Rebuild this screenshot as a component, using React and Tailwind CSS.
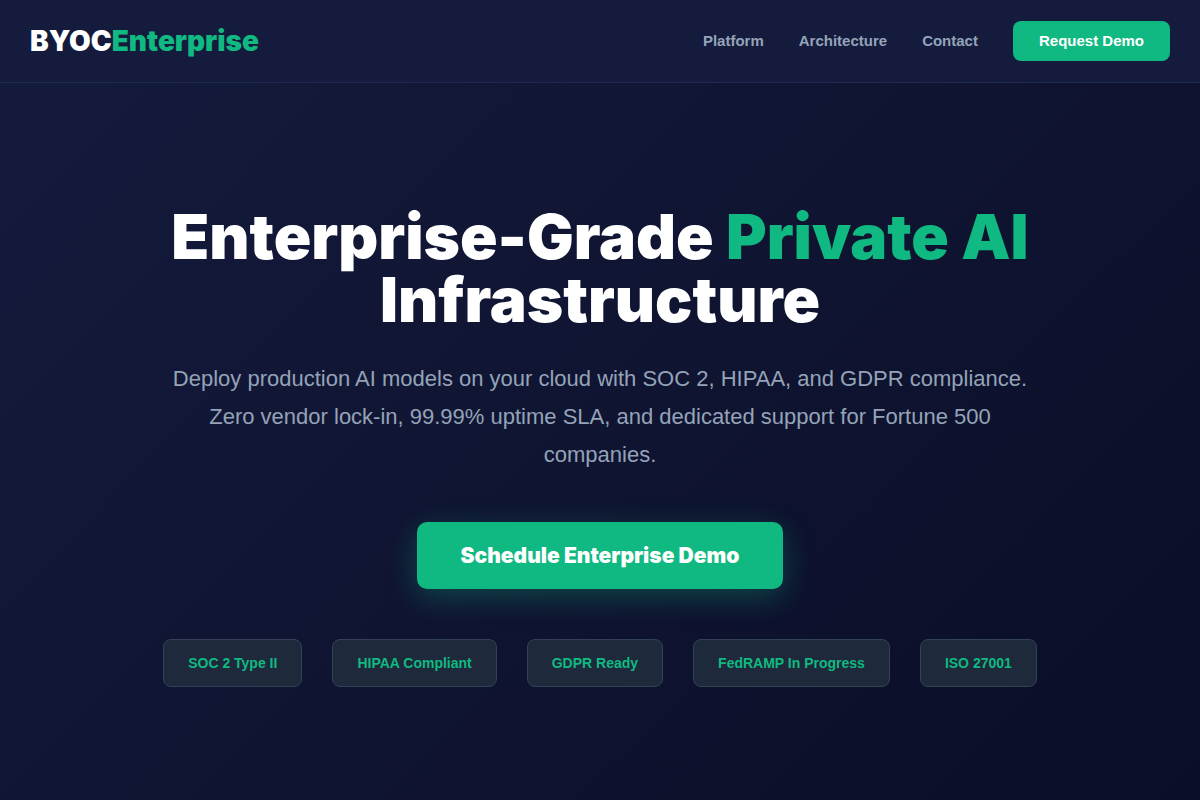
const links = ["Platform", "Architecture", "Contact"];
const badges = ["SOC 2 Type II", "HIPAA Compliant", "GDPR Ready", "FedRAMP In Progress", "ISO 27001"];

export default function App() {
  return (
    <div className="min-h-screen bg-linear-135 from-[#151b3d] to-[#0a0e27] font-['Liberation_Sans',Arial,sans-serif] text-white">
      <header className="border-b border-[#1e2a52] bg-[#151b3d]">
        <div className="mx-auto flex max-w-[1400px] items-center justify-between px-[30px] py-5">
          <a href="#" className="font-['Arial_Black','Inter',sans-serif] text-[28px] leading-[42px] font-black">
            BYOC<span className="text-[#10b981]">Enterprise</span>
          </a>
          <nav className="flex items-center gap-[35px] text-[15px] font-semibold">
            {links.map((l) => (
              <a key={l} href={`#${l.toLowerCase()}`} className="text-[#94a3b8]">{l}</a>
            ))}
            <button type="button" className="rounded-lg bg-[#10b981] px-[26px] py-2 leading-6">Request Demo</button>
          </nav>
        </div>
      </header>
      <main className="mx-auto flex max-w-[960px] flex-col items-center px-[30px] pt-[122px] pb-[112px] text-center">
        <h1 className="mb-[29px] font-['Arial_Black','Inter',sans-serif] text-[62px] leading-[63px] font-black">
          Enterprise-Grade <span className="text-[#10b981]">Private AI</span> Infrastructure
        </h1>
        <p className="mb-12 text-[22px] leading-[38px] text-[#94a3b8]">
          Deploy production AI models on your cloud with SOC 2, HIPAA, and GDPR compliance. Zero vendor lock-in, 99.99% uptime SLA, and dedicated support for Fortune 500 companies.
        </p>
        <button type="button" className="rounded-[10px] bg-[#10b981] px-11 py-[18px] font-['Arial_Black','Inter',sans-serif] text-[21px] leading-[31px] font-black shadow-[0_8px_30px_#10b9814d]">
          Schedule Enterprise Demo
        </button>
        <ul className="mt-[50px] flex flex-wrap justify-center gap-[30px]">
          {badges.map((b) => (
            <li key={b} className="rounded-lg border border-[#334155] bg-[#1e293b] px-6 py-3 text-[14px] leading-[22px] font-semibold whitespace-nowrap text-[#10b981]">{b}</li>
          ))}
        </ul>
      </main>
    </div>
  );
}
